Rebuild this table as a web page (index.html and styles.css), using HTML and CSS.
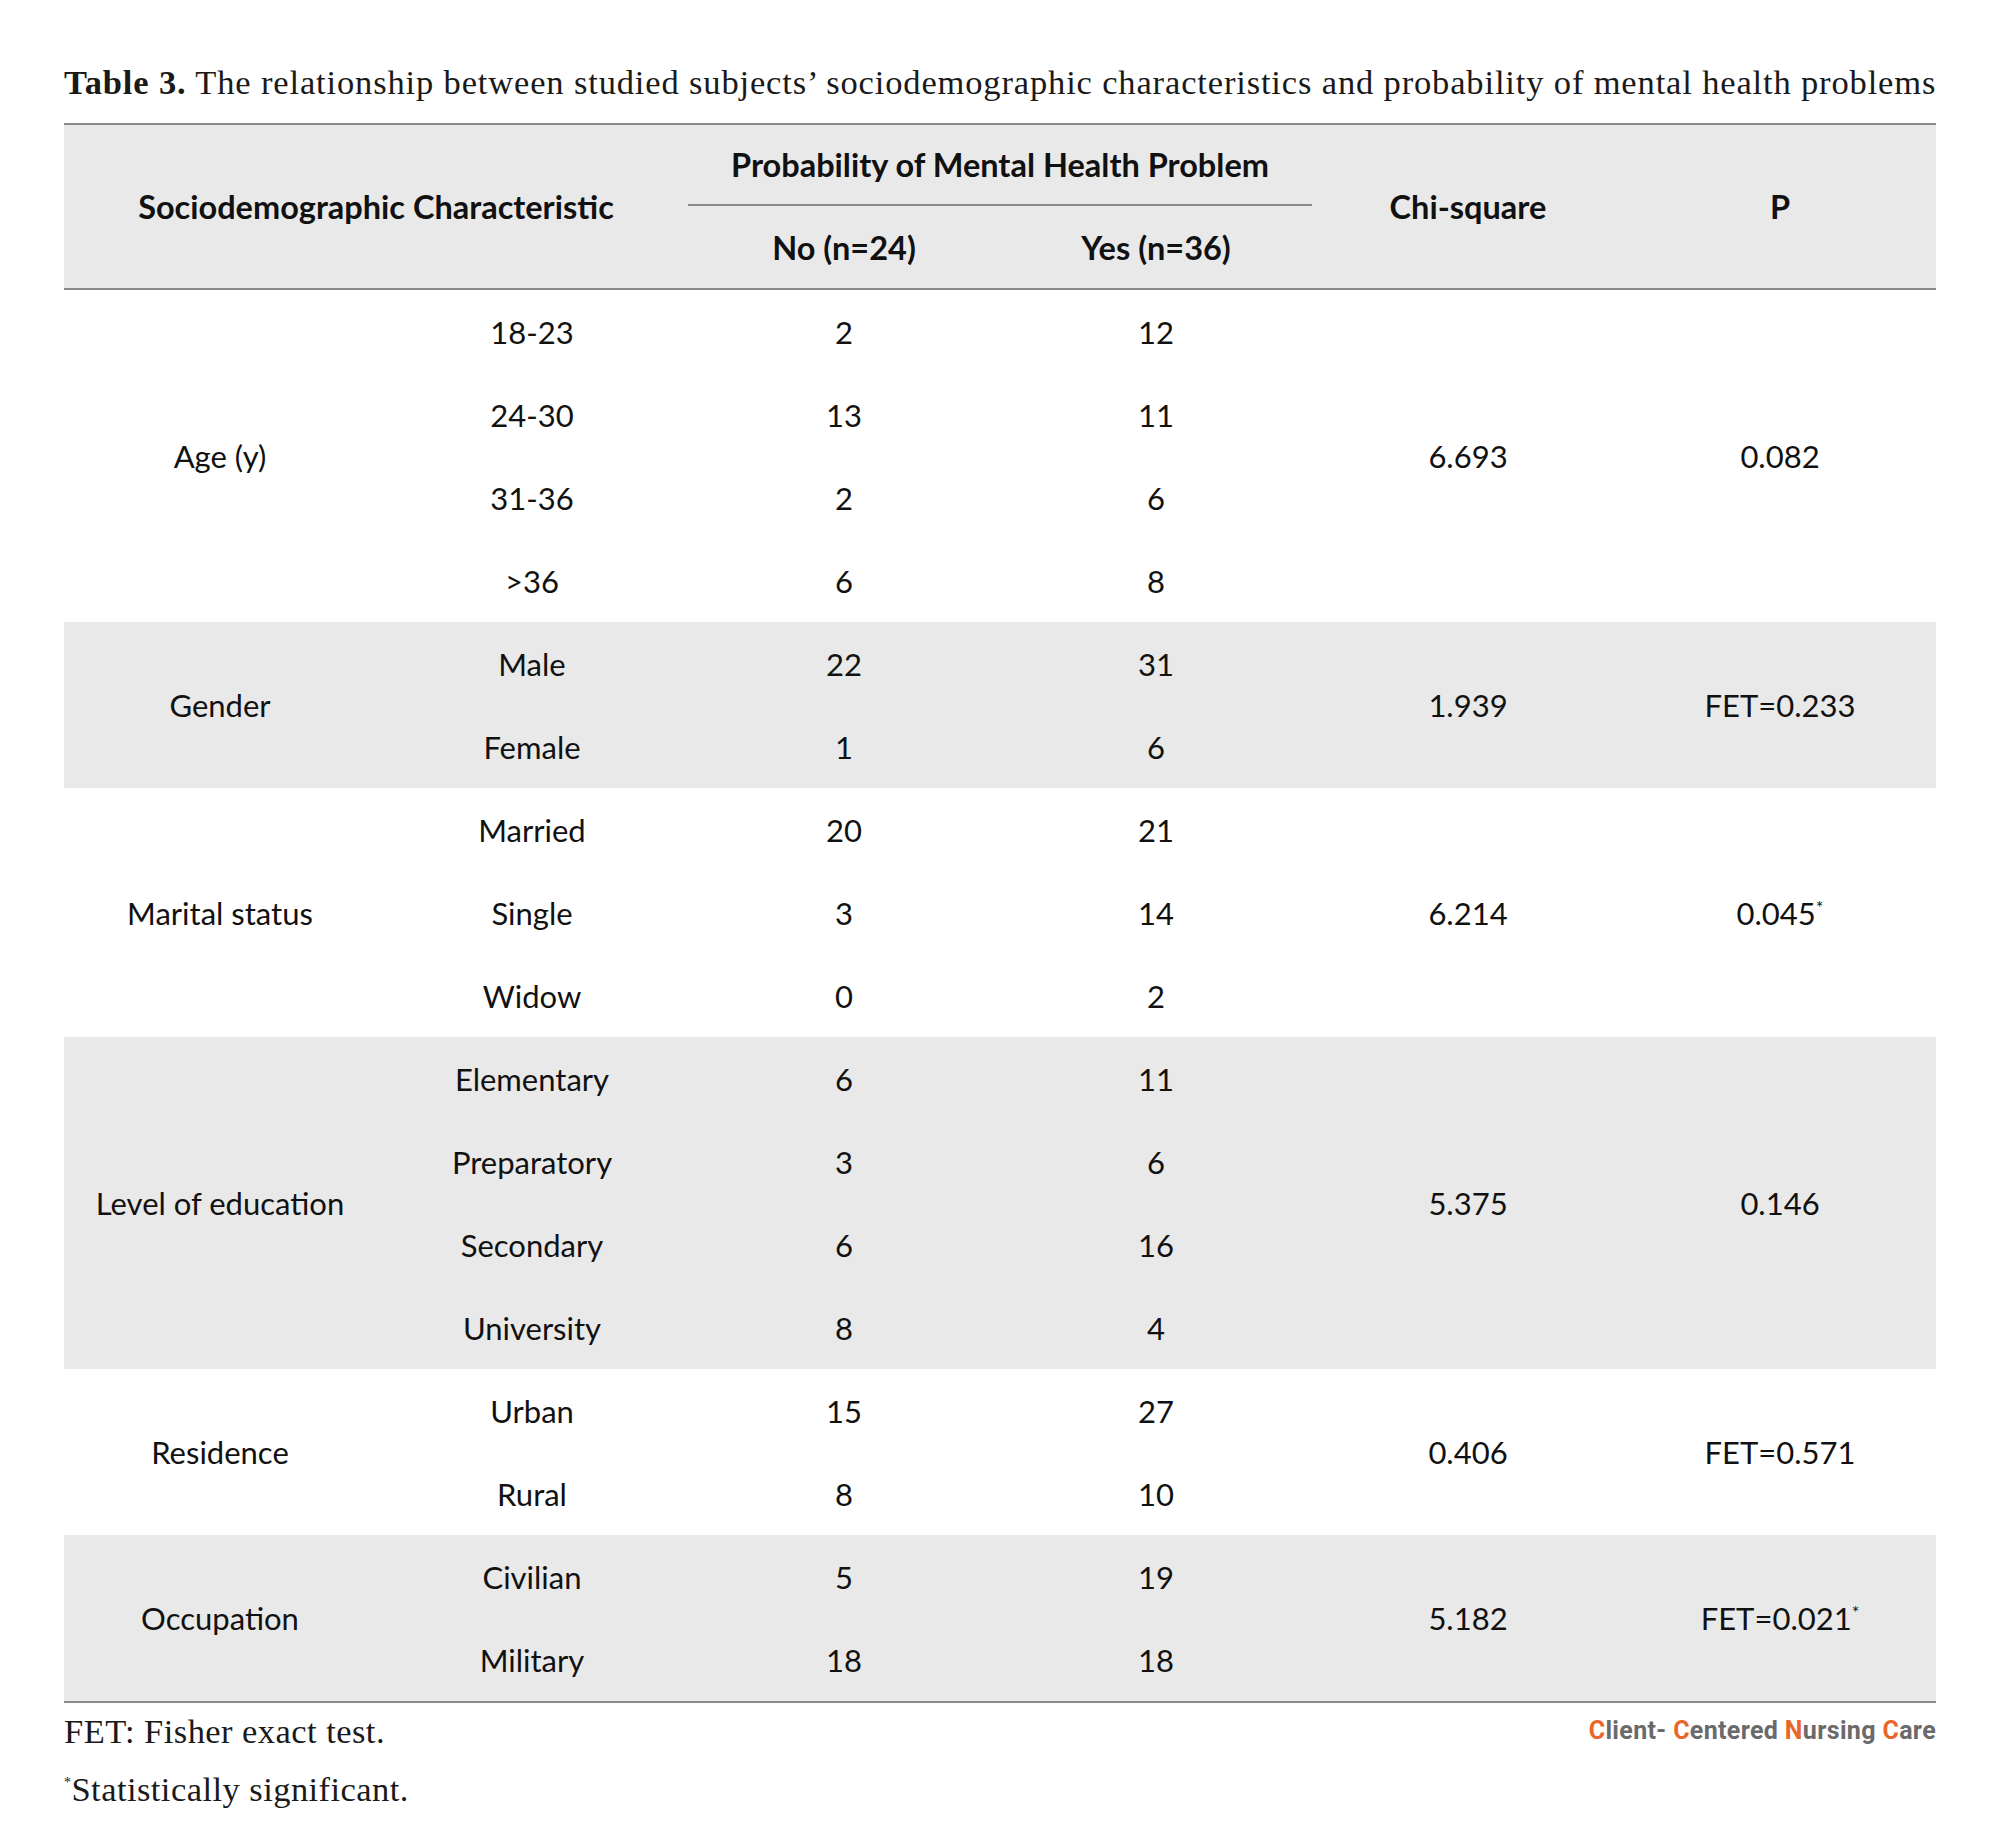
FILE: index.html
```html
<!DOCTYPE html>
<html>
<head>
<meta charset="utf-8">
<link rel="stylesheet" href="styles.css">
</head>
<body>
<div class="page">
  <p class="caption"><b>Table 3.</b> The relationship between studied subjects’ sociodemographic characteristics and probability of mental health problems</p>
  <table class="data">
    <colgroup><col><col><col><col><col><col></colgroup>
    <thead>
      <tr class="h1">
        <th colspan="2" rowspan="2">Sociodemographic Characteristic</th>
        <th colspan="2" class="span">Probability of Mental Health Problem</th>
        <th rowspan="2">Chi-square</th>
        <th rowspan="2">P</th>
      </tr>
      <tr class="h2">
        <th>No (n=24)</th>
        <th>Yes (n=36)</th>
      </tr>
    </thead>
    <tbody>
      <tr><td rowspan="4">Age (y)</td><td>18-23</td><td>2</td><td>12</td><td rowspan="4">6.693</td><td rowspan="4">0.082</td></tr>
      <tr><td>24-30</td><td>13</td><td>11</td></tr>
      <tr><td>31-36</td><td>2</td><td>6</td></tr>
      <tr><td>&gt;36</td><td>6</td><td>8</td></tr>
    </tbody>
    <tbody class="shade">
      <tr><td rowspan="2">Gender</td><td>Male</td><td>22</td><td>31</td><td rowspan="2">1.939</td><td rowspan="2">FET=0.233</td></tr>
      <tr><td>Female</td><td>1</td><td>6</td></tr>
    </tbody>
    <tbody>
      <tr><td rowspan="3">Marital status</td><td>Married</td><td>20</td><td>21</td><td rowspan="3">6.214</td><td rowspan="3">0.045<sup>*</sup></td></tr>
      <tr><td>Single</td><td>3</td><td>14</td></tr>
      <tr><td>Widow</td><td>0</td><td>2</td></tr>
    </tbody>
    <tbody class="shade">
      <tr><td rowspan="4">Level of education</td><td>Elementary</td><td>6</td><td>11</td><td rowspan="4">5.375</td><td rowspan="4">0.146</td></tr>
      <tr><td>Preparatory</td><td>3</td><td>6</td></tr>
      <tr><td>Secondary</td><td>6</td><td>16</td></tr>
      <tr><td>University</td><td>8</td><td>4</td></tr>
    </tbody>
    <tbody>
      <tr><td rowspan="2">Residence</td><td>Urban</td><td>15</td><td>27</td><td rowspan="2">0.406</td><td rowspan="2">FET=0.571</td></tr>
      <tr><td>Rural</td><td>8</td><td>10</td></tr>
    </tbody>
    <tbody class="shade last">
      <tr><td rowspan="2">Occupation</td><td>Civilian</td><td>5</td><td>19</td><td rowspan="2">5.182</td><td rowspan="2">FET=0.021<sup>*</sup></td></tr>
      <tr><td>Military</td><td>18</td><td>18</td></tr>
    </tbody>
  </table>
  <div class="foot">
    <div class="notes">
      <p class="note">FET: Fisher exact test.</p>
      <p class="note"><sup>*</sup>Statistically significant.</p>
    </div>
    <div class="brand"><span class="o">C</span>lient- <span class="o">C</span>entered <span class="o">N</span>ursing <span class="o">C</span>are</div>
  </div>
</div>
</body>
</html>
```

FILE: styles.css
```css
html, body {
  margin: 0;
  padding: 0;
  background: #ffffff;
}

.page {
  width: 1872px;
  padding: 0 0 0 64px;
}

.caption {
  margin: 0;
  padding-top: 63px;
  height: 60px;
  font-family: "Liberation Serif", serif;
  font-size: 34.5px;
  letter-spacing: 0.85px;
  line-height: 38px;
  color: #1a1a1a;
  white-space: nowrap;
}

.caption b {
  font-weight: bold;
}

.data {
  width: 1872px;
  border-collapse: collapse;
  table-layout: fixed;
  font-family: "Lato", "Liberation Sans", sans-serif;
  font-size: 31px;
  color: #111;
}

.data col {
  width: 312px;
}

.data thead {
  background: #e9e9e9;
}

.data thead tr.h1 th {
  border-top: 2px solid #8a8a8a;
}

.data th {
  font-weight: bold;
  font-size: 32.5px;
  text-align: center;
  padding: 0;
  vertical-align: middle;
}

.data tr.h1 {
  height: 81px;
}

.data tr.h2 {
  height: 84px;
}

.data tr.h2 th {
  border-bottom: 2px solid #8a8a8a;
}

.data th.span {
  border-bottom: 2px solid #8a8a8a;
  background-clip: padding-box;
}

.data td {
  height: 83px;
  padding: 0;
  text-align: center;
  vertical-align: middle;
}

.data thead tr.h1 th[rowspan] {
  border-bottom: 2px solid #8a8a8a;
}

.data tbody.shade {
  background: #e9e9e9;
}

.data tbody.last tr:last-child td,
.data tbody.last td[rowspan] {
  border-bottom: 2px solid #8a8a8a;
}

.data sup {
  font-size: 18px;
  line-height: 0;
  vertical-align: 11px;
}

.foot {
  display: flex;
  justify-content: space-between;
  align-items: flex-start;
  width: 1872px;
}

.notes {
  padding-top: 9px;
}

.note {
  margin: 0 0 20px 0;
  font-family: "Liberation Serif", serif;
  font-size: 34.5px;
  letter-spacing: 0.45px;
  line-height: 38px;
  color: #1a1a1a;
}

.note sup {
  font-size: 14px;
  line-height: 0;
  vertical-align: 14px;
}

.brand {
  padding-top: 13px;
  font-family: "Roboto", "Liberation Sans", sans-serif;
  font-weight: bold;
  font-size: 25px;
  color: #6a6a6a;
  letter-spacing: 0.35px;
}

.brand .o {
  color: #e8662a;
}
```
